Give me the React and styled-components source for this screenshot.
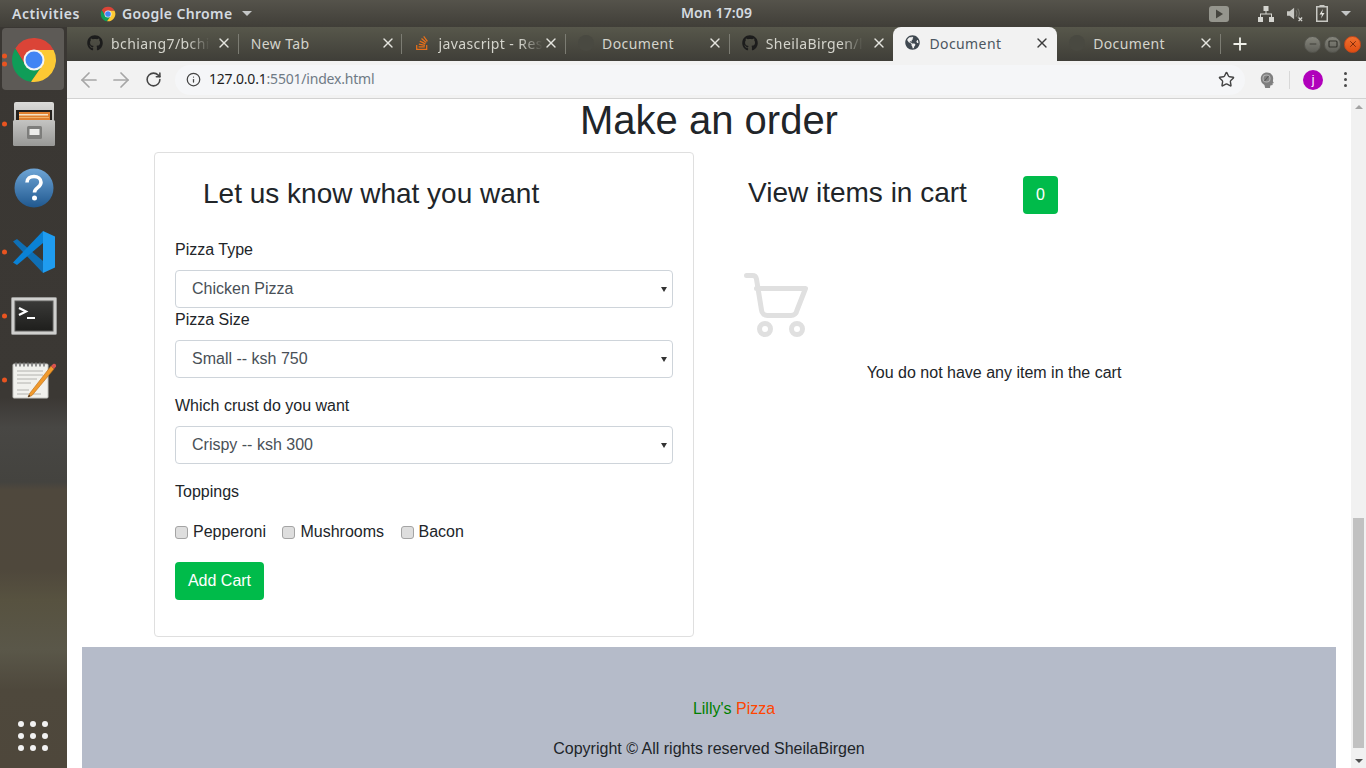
import React from "react";
import styled, { createGlobalStyle } from "styled-components";
import { FaGithub, FaStackOverflow, FaGlobeAmericas } from "react-icons/fa";
import { ArrowLeft, ArrowRight, RotateCw, Info, Star, X, Plus, Minus } from "lucide-react";

const GlobalStyle = createGlobalStyle`
  html, body {
    margin: 0;
    padding: 0;
    width: 1366px;
    height: 768px;
    overflow: hidden;
  }
  * {
    box-sizing: border-box;
  }
`;

const Desktop = styled.div`
  width: 1366px;
  height: 768px;
  display: flex;
  flex-direction: column;
  overflow: hidden;
  font-family: "Liberation Sans", Arial, sans-serif;
  color: #212529;
`;

const TopBar = styled.div`
  height: 27px;
  flex: none;
  display: flex;
  align-items: center;
  padding: 0 0 0 12px;
  position: relative;
  background: linear-gradient(#55534b, #403e38);
  color: #d5dbe0;
  font-family: "Noto Sans", sans-serif;
  font-size: 14px;
  font-weight: 600;
`;

const Activities = styled.span`
  letter-spacing: 0.55px;
`;

const TopMenu = styled.span`
  display: flex;
  align-items: center;
  gap: 6px;
  margin-left: 20px;
  letter-spacing: 0.35px;
`;

const Caret = styled.span`
  width: 0;
  height: 0;
  border-left: 5px solid transparent;
  border-right: 5px solid transparent;
  border-top: 5px solid #c4c6c6;
  margin-left: ${(p) => p.$left || 0}px;
`;

const Clock = styled.span`
  position: absolute;
  left: 681px;
  top: 3px;
  line-height: 20px;
  letter-spacing: 0.1px;
`;

const Tray = styled.div`
  margin-left: auto;
  display: flex;
  align-items: center;
  gap: 13px;
  padding-right: 15px;
`;

const TrayPlay = styled.span`
  display: flex;
  margin-right: 16px;
`;

const Main = styled.div`
  flex: 1;
  display: flex;
  min-height: 0;
`;

const Dock = styled.nav`
  width: 67px;
  flex: none;
  display: flex;
  flex-direction: column;
  padding-top: 1px;
  background: linear-gradient(
    #3a3733 0,
    #3b3834 370px,
    #484744 400px,
    #44433f 455px,
    #4f483d 463px,
    #4f483c 543px,
    #575240 573px,
    #5a5749 623px,
    #4e483c 663px,
    #4e473b 741px
  );
`;

const DockItem = styled.div`
  height: 64px;
  flex: none;
  position: relative;
  display: flex;
  align-items: center;
  justify-content: center;
  &::before {
    content: "";
    position: absolute;
    left: 2px;
    right: 3px;
    top: 0;
    height: 62px;
    border-radius: 4px;
    background: ${(p) => (p.$active ? "#5d5a56" : "transparent")};
  }
  svg {
    position: relative;
  }
`;

const RunDots = styled.span`
  position: absolute;
  left: 2px;
  top: 50%;
  transform: translateY(-50%);
  display: flex;
  flex-direction: column;
  gap: 3px;
  i {
    display: block;
    width: 5px;
    height: 5px;
    border-radius: 50%;
    background: #e95420;
  }
`;

const AppGrid = styled.div`
  margin-top: auto;
  margin-left: 18px;
  margin-bottom: 17px;
  display: grid;
  grid-template-columns: repeat(3, 6px);
  gap: 6px;
  i {
    width: 6px;
    height: 6px;
    border-radius: 50%;
    background: #f2f2f2;
  }
`;

const Browser = styled.div`
  flex: 1;
  min-width: 0;
  display: flex;
  flex-direction: column;
`;

const TabStrip = styled.div`
  height: 34px;
  flex: none;
  display: flex;
  align-items: stretch;
  padding-left: 8px;
  background: linear-gradient(#57574b, #3f3e38);
`;

const Tab = styled.div`
  width: 163.7px;
  flex: none;
  position: relative;
  display: flex;
  align-items: center;
  padding: 0 0 2px 12px;
  font-family: "Noto Sans", sans-serif;
  font-size: 14px;
  letter-spacing: 0.4px;
  color: ${(p) => (p.$active ? "#4b5660" : "#d4d4cc")};
  background: ${(p) => (p.$active ? "#f2f2f2" : "transparent")};
  border-radius: ${(p) => (p.$active ? "8px 8px 0 0" : "0")};
  &::after {
    content: "";
    position: absolute;
    right: 0;
    top: 7px;
    height: 20px;
    width: 1px;
    background: ${(p) => (p.$sep ? "#7c7c73" : "transparent")};
  }
`;

const TabIcon = styled.span`
  width: 16px;
  height: 16px;
  flex: none;
  display: flex;
  margin-right: 8px;
  color: ${(p) => p.$color || "#1c1c1c"};
`;

const TabDot = styled.span`
  width: 16px;
  height: 16px;
  flex: none;
  margin-right: 8px;
  border-radius: 50%;
  background: #494941;
`;

const TabTitle = styled.span`
  flex: none;
  white-space: nowrap;
  -webkit-mask-image: linear-gradient(90deg, #000 78%, transparent 100%);
  mask-image: linear-gradient(90deg, #000 78%, transparent 100%);
`;

const PlainTabTitle = styled.span`
  flex: none;
  white-space: nowrap;
`;

const TabClose = styled.span`
  position: absolute;
  left: 141px;
  top: 8px;
  display: flex;
  color: ${(p) => (p.$active ? "#3c3c3c" : "#e4e4de")};
`;

const NewTab = styled.span`
  margin-left: 9px;
  display: flex;
  align-items: center;
  color: #f0f0ea;
`;

const WindowButtons = styled.div`
  margin-left: auto;
  margin-right: 5px;
  display: flex;
  align-items: center;
  gap: 3px;
`;

const WinButton = styled.span`
  width: 17px;
  height: 17px;
  border-radius: 50%;
  display: flex;
  align-items: center;
  justify-content: center;
  border: 1px solid ${(p) => (p.$close ? "#c9481a" : "#55554e")};
  background: ${(p) =>
    p.$close
      ? "linear-gradient(#f0702f, #e04e12)"
      : "linear-gradient(#85857c, #5f5f58)"};
  color: ${(p) => (p.$close ? "#6b2308" : "#35352f")};
`;

const Toolbar = styled.div`
  height: 38px;
  flex: none;
  display: flex;
  align-items: center;
  padding-left: 14px;
  background: #f2f2f2;
  border-bottom: 1px solid #d2d2d2;
`;

const NavButton = styled.span`
  width: 16px;
  display: flex;
  justify-content: center;
  margin-right: 16px;
  color: ${(p) => (p.$off ? "#a6a6a6" : "#444")};
  svg {
    flex: none;
  }
`;

const UrlPill = styled.div`
  width: 1070px;
  height: 30px;
  flex: none;
  margin-left: -2px;
  border-radius: 15px;
  background: #f5f6f8;
  display: flex;
  align-items: center;
  padding-left: 11px;
  padding-right: 10px;
  font-family: "Noto Sans", sans-serif;
  font-size: 14px;
  letter-spacing: -0.2px;
  color: #6f7a85;
`;

const UrlHost = styled.span`
  color: #1d1d1d;
`;

const UrlText = styled.span`
  margin: 0 0 2px 8px;
`;

const PillEnd = styled.span`
  margin-left: auto;
  display: flex;
  color: #444;
`;

const ToolIcons = styled.div`
  display: flex;
  align-items: center;
  margin-left: 13px;
`;

const ExtIcon = styled.span`
  display: flex;
`;

const ToolSep = styled.span`
  width: 1px;
  height: 18px;
  background: #d8d8d8;
  margin: 0 13px 0 13px;
`;

const Avatar = styled.span`
  width: 20px;
  height: 20px;
  border-radius: 50%;
  background: #b000bb;
  color: #fff;
  font-size: 12px;
  display: flex;
  align-items: center;
  justify-content: center;
`;

const MenuDots = styled.span`
  margin-left: 21px;
  display: flex;
  flex-direction: column;
  gap: 3px;
  i {
    width: 3px;
    height: 3px;
    border-radius: 50%;
    background: #4a4a4a;
  }
`;

const Viewport = styled.div`
  flex: 1;
  min-height: 0;
  display: flex;
  overflow: hidden;
  background: #fff;
`;

const Page = styled.main`
  flex: 1;
  min-width: 0;
  padding: 0 15px;
`;

const Heading = styled.h1`
  margin: 0 0 11px;
  font-size: 40px;
  font-weight: 400;
  line-height: 42px;
  text-align: center;
`;

const OrderRow = styled.div`
  display: flex;
  padding-left: 72px;
`;

const FormCard = styled.form`
  width: 540px;
  flex: none;
  padding: 24px 20px 36px;
  border: 1px solid #dfdfdf;
  border-radius: 4px;
`;

const CardTitle = styled.h2`
  margin: 0 0 ${(p) => p.$bottom || 0}px ${(p) => p.$left || 0}px;
  font-size: 28px;
  font-weight: 400;
  line-height: 34px;
`;

const Label = styled.label`
  display: block;
  font-size: 16px;
  line-height: 24px;
  margin-bottom: 8px;
`;

const SelectWrap = styled.div`
  position: relative;
  margin-bottom: ${(p) => p.$bottom}px;
  &::after {
    content: "";
    position: absolute;
    right: 6px;
    top: 17px;
    border-left: 3px solid transparent;
    border-right: 3px solid transparent;
    border-top: 5px solid #333;
  }
`;

const Select = styled.select`
  display: block;
  width: 100%;
  height: 38px;
  padding: 0 16px 2px;
  appearance: none;
  background: #fff;
  border: 1px solid #ced4da;
  border-radius: 4px;
  color: #495057;
  font-family: inherit;
  font-size: 16px;
`;

const Toppings = styled.div`
  display: flex;
  align-items: center;
  height: 24px;
  margin: 16px 0 18px;
  font-size: 16px;
`;

const Check = styled.input`
  appearance: none;
  flex: none;
  width: 13px;
  height: 13px;
  margin: 0 5px 0 0;
  border: 1px solid #a4a4a4;
  border-radius: 3px;
  background: #dedede;
`;

const ToppingLabel = styled.label`
  display: flex;
  align-items: center;
  margin-right: 16.5px;
`;

const GreenButton = styled.button`
  display: block;
  width: ${(p) => p.$w}px;
  height: 38px;
  padding: 0;
  border: 0;
  border-radius: 4px;
  background: #00bb4a;
  color: #fff;
  font-family: inherit;
  font-size: 16px;
`;

const CartColumn = styled.section`
  width: 600px;
  flex: none;
  padding-top: 24px;
`;

const CartHeader = styled.div`
  display: flex;
  align-items: flex-start;
  padding-left: 54px;
`;

const CartCount = styled(GreenButton)`
  margin-left: 56px;
`;

const EmptyCart = styled.div`
  margin: 58px 0 0 49px;
  display: flex;
`;

const EmptyText = styled.p`
  margin: 23px 0 0;
  font-size: 16px;
  line-height: 24px;
  text-align: center;
`;

const Footer = styled.footer`
  margin-top: 10px;
  height: 140px;
  padding-top: 50px;
  background: #b5bbc9;
  font-size: 16px;
  line-height: 24px;
  text-align: center;
`;

const Brand = styled.p`
  margin: 0 0 16px;
  padding-left: 50px;
`;

const BrandPart = styled.span`
  color: ${(p) => p.$color};
`;

const Copyright = styled.p`
  margin: 0;
`;

const ScrollBar = styled.div`
  width: 15px;
  flex: none;
  display: flex;
  flex-direction: column;
  align-items: center;
  background: #f1f1f1;
`;

const ScrollArrow = styled.span`
  height: 15px;
  flex: none;
  display: flex;
  align-items: center;
  &::before {
    content: "";
    border-left: 4px solid transparent;
    border-right: 4px solid transparent;
    ${(p) => (p.$up ? "border-bottom" : "border-top")}: 4px solid ${(p) =>
      p.$up ? "#a3a3a3" : "#505050"};
  }
`;

const ScrollTrack = styled.div`
  flex: 1;
  width: 11px;
  display: flex;
  flex-direction: column;
  justify-content: flex-end;
  padding-bottom: 5px;
`;

const ScrollThumb = styled.div`
  height: 230px;
  background: #c1c1c1;
`;

const ChromeLogo = ({ size }) => (
  <svg width={size} height={size} viewBox="0 0 48 48">
    <path fill="#db4437" d="M5.3 12.5A22 22 0 0 1 43.6 14H24L15.3 29Z" />
    <path fill="#0f9d58" d="M5.3 12.5A22 22 0 0 0 21 45.8L32.7 29L24 24L15.3 29Z" />
    <path fill="#fcc934" d="M43.6 14A22 22 0 0 1 21 45.8L32.7 29L24 14Z" />
    <circle cx="24" cy="24" r="10.5" fill="#f5f5f5" />
    <circle cx="24" cy="24" r="8.5" fill="#4285f4" />
  </svg>
);

const FilesIcon = () => (
  <svg width="44" height="46" viewBox="0 0 44 46">
    <defs>
      <linearGradient id="cabTop" x1="0" y1="0" x2="0" y2="1">
        <stop offset="0" stopColor="#dcdcda" />
        <stop offset="1" stopColor="#a6a6a4" />
      </linearGradient>
      <linearGradient id="cabBody" x1="0" y1="0" x2="0" y2="1">
        <stop offset="0" stopColor="#c4c4c2" />
        <stop offset="1" stopColor="#989896" />
      </linearGradient>
    </defs>
    <rect x="2" y="1" width="40" height="30" rx="2" fill="url(#cabTop)" />
    <rect x="4" y="9" width="36" height="12" fill="#24211e" />
    <rect x="7" y="11" width="31" height="9" fill="#e0802f" />
    <rect x="7" y="13" width="29" height="1.500" fill="#f6e3c6" />
    <rect x="7" y="16" width="30" height="1" fill="#f3b368" />
    <rect x="1" y="19" width="42" height="26" rx="1.500" fill="url(#cabBody)" />
    <rect x="15" y="25" width="15" height="13" rx="1.500" fill="#7d7d7b" />
    <rect x="17.500" y="28" width="10" height="6" fill="#ececea" />
  </svg>
);

const HelpIcon = () => (
  <svg width="40" height="40" viewBox="0 0 40 40">
    <defs>
      <linearGradient id="hlp" x1="0" y1="0" x2="0" y2="1">
        <stop offset="0" stopColor="#6ea5d6" />
        <stop offset="1" stopColor="#20588f" />
      </linearGradient>
    </defs>
    <circle cx="20" cy="20" r="19.500" fill="url(#hlp)" />
    <path d="M13 14.500c0-4 3.200-6 7-6s7 2.200 7 5.800c0 5.700-6.500 5-6.500 10.200" fill="none" stroke="#fff" strokeWidth="3.600" />
    <circle cx="20.500" cy="30" r="2.500" fill="#fff" />
  </svg>
);

const CodeIcon = () => (
  <svg width="44" height="44" viewBox="0 0 44 44">
    <path fill="#0f6fb5" d="M1 11.500L5 9L31 31V43Z" />
    <path fill="#0a82d6" d="M1 32.500L5 35L31 13V1Z" />
    <path fill="#1f9cf0" d="M31 1L43 6.500V37.500L31 43Z" />
  </svg>
);

const TerminalIcon = () => (
  <svg width="46" height="38" viewBox="0 0 46 38">
    <defs>
      <linearGradient id="termBg" x1="0" y1="0" x2="0" y2="1">
        <stop offset="0" stopColor="#3a3a38" />
        <stop offset="1" stopColor="#1e1e1c" />
      </linearGradient>
    </defs>
    <rect x="0.500" y="0.500" width="45" height="37" rx="1" fill="#d0d0ce" stroke="#9a9a98" />
    <rect x="4" y="4" width="38" height="30" fill="url(#termBg)" stroke="#5c5c5a" />
    <path d="M8 11l7 3.500-7 3.500" fill="none" stroke="#fff" strokeWidth="2.200" />
    <path d="M16 21h8" stroke="#fff" strokeWidth="2" />
  </svg>
);

const NotesIcon = () => (
  <svg width="46" height="38" viewBox="0 0 46 38">
    <rect x="2" y="3" width="35" height="34" rx="1" fill="#f1f1ed" stroke="#c4c4c0" />
    <path d="M5 1.500v4M9 1.500v4M13 1.500v4M17 1.500v4M21 1.500v4M25 1.500v4M29 1.500v4M33 1.500v4" stroke="#777" strokeWidth="1.600" />
    <path d="M6 10h26M6 14h26M6 18h20M6 22h14M6 29h12M6 33h24" stroke="#b2b2ae" strokeWidth="1" />
    <path d="M19 32l-2 4 4-1.500L43 8l-3-3z" fill="#f19a2c" stroke="#b56a14" strokeWidth="0.600" />
    <path d="M40 5l3 3 2-2.500c.5-2-1-3.500-2.800-2.600z" fill="#d9534f" />
    <path d="M17 36l1-2.200 1.400 1.400z" fill="#222" />
  </svg>
);

const PlayIcon = () => (
  <svg width="20" height="16" viewBox="0 0 20 16">
    <rect width="20" height="16" rx="3" fill="#95958d" />
    <path d="M7 3.500v9l7-4.500z" fill="#45443e" />
  </svg>
);

const NetworkIcon = () => (
  <svg width="16" height="16" viewBox="0 0 16 16" fill="#d5d5d0">
    <rect x="5.500" y="0" width="5" height="5" />
    <rect x="0" y="11" width="5" height="5" />
    <rect x="11" y="11" width="5" height="5" />
    <path d="M7.500 5h1v2.500H14V11h-1V8.500H3V11H2V7.500h5.500z" />
  </svg>
);

const VolumeIcon = () => (
  <svg width="16" height="16" viewBox="0 0 18 16" fill="none">
    <path d="M0 5h3l5-4v13l-5-4H0z" fill="#c8c8c3" />
    <path d="M10 4c1.500 1.500 1.500 5 0 7M12 2c2.500 2.500 2.500 8 0 10" stroke="#77776f" strokeWidth="1.200" />
    <path d="M13 12l4 4M17 12l-4 4" stroke="#d5d5d0" strokeWidth="1.500" />
  </svg>
);

const BatteryIcon = () => (
  <svg width="12" height="17" viewBox="0 0 12 17" fill="none">
    <rect x="3.500" y="0" width="5" height="2" fill="#c8c8c3" />
    <rect x="0.750" y="1.750" width="10.500" height="14.500" stroke="#c8c8c3" strokeWidth="1.500" />
    <path d="M7 4L3.500 9.500H6L5 13.500 8.500 8H6z" fill="#e4e4df" />
  </svg>
);

const ExtensionHead = () => (
  <svg width="18" height="18" viewBox="0 0 18 18" fill="none">
    <path
      d="M9 1.500c3.600 0 6.200 2.500 6.200 5.800 0 1.400-.4 2.300-.2 3.200l.8 1.400-1.300.6.200 1.500-2.400.6-.3 2.400H7.200L6.400 14C4 12.800 2.800 10.500 2.800 7.800 2.800 4.200 5.400 1.500 9 1.500z"
      fill="#7f7f7f"
    />
    <circle cx="8.500" cy="7.500" r="3.500" stroke="#b4b4b4" strokeWidth="1.100" />
    <path d="M6.500 10l4-5" stroke="#555" strokeWidth="1.100" />
  </svg>
);

// stroke drawing of the empty cart, in pixels of a 66 box
const EmptyCartIcon = () => (
  <svg width="66" height="66" viewBox="0 0 66 66" fill="none" stroke="#e0e0e0" strokeWidth="5" strokeLinecap="round" strokeLinejoin="round">
    <path d="M3.500 3.500H9.500a4 4 0 0 1 3.900 3.200L18.500 38a6 6 0 0 0 5.900 5.500H48a6 6 0 0 0 5.900-5L62.500 16.500H13.500" />
    <circle cx="22" cy="57" r="5.500" />
    <circle cx="54" cy="57" r="5.500" />
  </svg>
);

const tabs = [
  { title: "bchiang7/bchi", icon: <FaGithub size={16} />, sep: true, fade: true },
  { title: "New Tab", sep: true },
  { title: "javascript - Res", icon: <FaStackOverflow size={16} />, color: "#e8701a", sep: true, fade: true },
  { title: "Document", dot: true, sep: true },
  { title: "SheilaBirgen/l", icon: <FaGithub size={16} />, fade: true },
  { title: "Document", icon: <FaGlobeAmericas size={15} />, color: "#3f4850", active: true },
  { title: "Document", dot: true, sep: true },
];

const dockApps = [
  { key: "chrome", icon: <ChromeLogo size={48} />, dots: 2, active: true },
  { key: "files", icon: <FilesIcon />, dots: 1 },
  { key: "help", icon: <HelpIcon />, dots: 0 },
  { key: "code", icon: <CodeIcon />, dots: 1 },
  { key: "terminal", icon: <TerminalIcon />, dots: 1 },
  { key: "notes", icon: <NotesIcon />, dots: 1 },
];

const App = () => (
  <Desktop>
    <GlobalStyle />
    <TopBar>
      <Activities>Activities</Activities>
      <TopMenu>
        <ChromeLogo size={16} />
        Google Chrome
        <Caret $left={4} />
      </TopMenu>
      <Clock>Mon 17:09</Clock>
      <Tray>
        <TrayPlay>
          <PlayIcon />
        </TrayPlay>
        <NetworkIcon />
        <VolumeIcon />
        <BatteryIcon />
        <Caret />
      </Tray>
    </TopBar>
    <Main>
      <Dock>
        {dockApps.map((app) => (
          <DockItem key={app.key} $active={app.active}>
            {app.dots > 0 && (
              <RunDots>
                {Array.from({ length: app.dots }).map((_, i) => (
                  <i key={i} />
                ))}
              </RunDots>
            )}
            {app.icon}
          </DockItem>
        ))}
        <AppGrid>
          {Array.from({ length: 9 }).map((_, i) => (
            <i key={i} />
          ))}
        </AppGrid>
      </Dock>
      <Browser>
        <TabStrip>
          {tabs.map((tab, i) => (
            <Tab key={i} $active={tab.active} $sep={tab.sep}>
              {tab.icon && <TabIcon $color={tab.color}>{tab.icon}</TabIcon>}
              {tab.dot && <TabDot />}
              {tab.fade ? (
                <TabTitle>{tab.title}</TabTitle>
              ) : (
                <PlainTabTitle>{tab.title}</PlainTabTitle>
              )}
              <TabClose $active={tab.active}>
                <X size={16} strokeWidth={2} />
              </TabClose>
            </Tab>
          ))}
          <NewTab>
            <Plus size={20} strokeWidth={2.2} />
          </NewTab>
          <WindowButtons>
            <WinButton>
              <Minus size={10} strokeWidth={2} />
            </WinButton>
            <WinButton>
              <svg width="10" height="8" viewBox="0 0 10 8" fill="none">
                <rect x="1" y="1" width="8" height="6" rx="1" stroke="#35352f" strokeWidth="1.200" />
              </svg>
            </WinButton>
            <WinButton $close>
              <X size={10} strokeWidth={2} />
            </WinButton>
          </WindowButtons>
        </TabStrip>
        <Toolbar>
          <NavButton $off>
            <ArrowLeft size={24} strokeWidth={1.7} />
          </NavButton>
          <NavButton $off>
            <ArrowRight size={24} strokeWidth={1.7} />
          </NavButton>
          <NavButton>
            <RotateCw size={17} strokeWidth={2.2} />
          </NavButton>
          <UrlPill>
            <Info size={15} color="#444" strokeWidth={2} />
            <UrlText>
              <UrlHost>127.0.0.1</UrlHost>:5501/index.html
            </UrlText>
            <PillEnd>
              <Star size={17} strokeWidth={2} />
            </PillEnd>
          </UrlPill>
          <ToolIcons>
            <ExtIcon>
              <ExtensionHead />
            </ExtIcon>
            <ToolSep />
            <Avatar>j</Avatar>
            <MenuDots>
              <i />
              <i />
              <i />
            </MenuDots>
          </ToolIcons>
        </Toolbar>
        <Viewport>
          <Page>
            <Heading>Make an order</Heading>
            <OrderRow>
              <FormCard>
                <CardTitle $left={28} $bottom={27}>
                  Let us know what you want
                </CardTitle>
                <Label>Pizza Type</Label>
                <SelectWrap $bottom={0}>
                  <Select defaultValue="chicken">
                    <option value="chicken">Chicken Pizza</option>
                  </Select>
                </SelectWrap>
                <Label>Pizza Size</Label>
                <SelectWrap $bottom={16}>
                  <Select defaultValue="small">
                    <option value="small">Small -- ksh 750</option>
                  </Select>
                </SelectWrap>
                <Label>Which crust do you want</Label>
                <SelectWrap $bottom={16}>
                  <Select defaultValue="crispy">
                    <option value="crispy">Crispy -- ksh 300</option>
                  </Select>
                </SelectWrap>
                <Label>Toppings</Label>
                <Toppings>
                  <ToppingLabel>
                    <Check type="checkbox" />
                    Pepperoni
                  </ToppingLabel>
                  <ToppingLabel>
                    <Check type="checkbox" />
                    Mushrooms
                  </ToppingLabel>
                  <ToppingLabel>
                    <Check type="checkbox" />
                    Bacon
                  </ToppingLabel>
                </Toppings>
                <GreenButton type="button" $w={89}>
                  Add Cart
                </GreenButton>
              </FormCard>
              <CartColumn>
                <CartHeader>
                  <CardTitle>View items in cart</CardTitle>
                  <CartCount type="button" $w={35}>
                    0
                  </CartCount>
                </CartHeader>
                <EmptyCart>
                  <EmptyCartIcon />
                </EmptyCart>
                <EmptyText>You do not have any item in the cart</EmptyText>
              </CartColumn>
            </OrderRow>
            <Footer>
              <Brand>
                <BrandPart $color="green">Lilly's</BrandPart>{" "}
                <BrandPart $color="orangered">Pizza</BrandPart>
              </Brand>
              <Copyright>Copyright © All rights reserved SheilaBirgen</Copyright>
            </Footer>
          </Page>
          <ScrollBar>
            <ScrollArrow $up />
            <ScrollTrack>
              <ScrollThumb />
            </ScrollTrack>
            <ScrollArrow />
          </ScrollBar>
        </Viewport>
      </Browser>
    </Main>
  </Desktop>
);

export default App;
